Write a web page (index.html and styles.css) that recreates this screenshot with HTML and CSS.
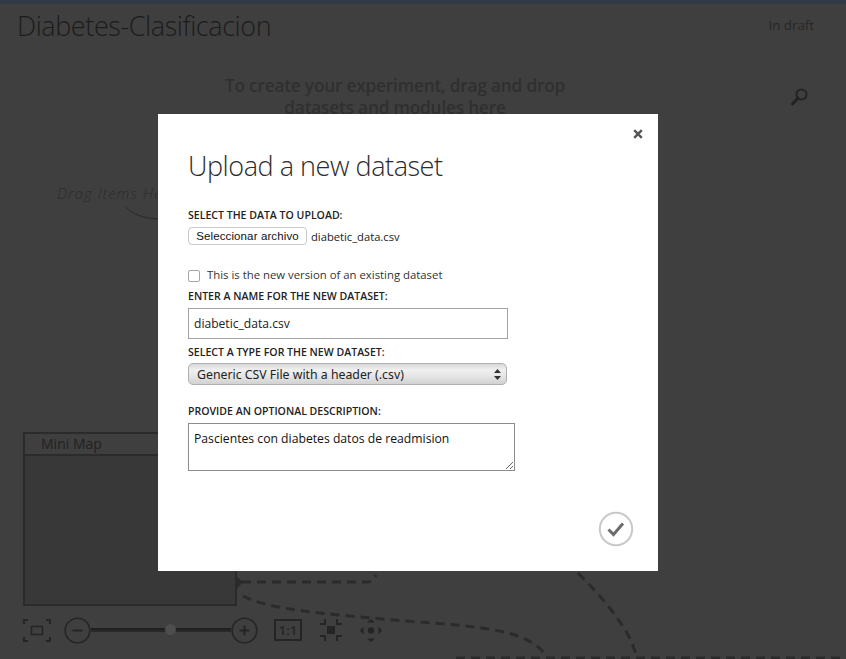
FILE: index.html
```html
<!DOCTYPE html>
<html lang="en">
<head>
<meta charset="utf-8">
<title>Diabetes-Clasificacion</title>
<link rel="stylesheet" href="styles.css">
</head>
<body>
<div class="page">
  <div class="topbar"></div>
  <header class="header">
    <h1 class="exp-title">Diabetes-Clasificacion</h1>
    <span class="status">In draft</span>
  </header>
  <main class="canvas">
    <p class="hint">To create your experiment, drag and drop<br>datasets and modules here</p>
    <svg class="search-icon" width="20" height="20" viewBox="0 0 20 20"><circle cx="11.5" cy="7.5" r="5" fill="none" stroke="#232323" stroke-width="2"/><path d="M8 11 L2.5 17" stroke="#232323" stroke-width="3" stroke-linecap="round"/></svg>
    <span class="drag-note">Drag Items Here</span>
    <svg class="lines" width="846" height="659" viewBox="0 0 846 659">
      <path d="M126 207 C132 214 142 218 158 219" fill="none" stroke="#2a2a2a" stroke-width="1"/>
      <g fill="none" stroke="#2b2b2b" stroke-width="3" stroke-dasharray="9 6">
        <path d="M242 582 H368 Q373 581 376 575"/>
        <path d="M243 596 C270 610 320 613 404 621 C480 626 530 630 546 656"/>
        <path d="M578 573 C605 600 630 630 636 655"/>
        <path d="M456 658 H846" />
      </g>
      <path d="M236 576 L243 582 L236 590 Z" fill="#2b2b2b"/>
    </svg>
    <section class="minimap">
      <div class="minimap-title">Mini Map</div>
    </section>
    <div class="toolbar">
      <svg class="tool" width="28" height="23" viewBox="0 0 28 23" fill="none" stroke="#252525" stroke-width="2">
        <path d="M1 5V1H5M23 1H27V5M1 18V22H5M23 22H27V18"/>
        <rect x="8.5" y="7.5" width="11" height="8" stroke-width="1.6"/>
      </svg>
      <div class="zoom">
        <svg width="27" height="27" viewBox="0 0 27 27" fill="none" stroke="#252525"><circle cx="13.5" cy="13.5" r="12.3" stroke-width="1.6"/><path d="M8.5 13.5H18.5" stroke-width="2"/></svg>
        <div class="track"><span class="thumb"></span></div>
        <svg width="27" height="27" viewBox="0 0 27 27" fill="none" stroke="#252525"><circle cx="13.5" cy="13.5" r="12.3" stroke-width="1.6"/><path d="M8.5 13.5H18.5M13.5 8.5V18.5" stroke-width="2"/></svg>
      </div>
      <span class="one-to-one">1:1</span>
      <svg class="tool tool-center" width="22" height="22" viewBox="0 0 22 22" fill="none" stroke="#252525" stroke-width="2">
        <rect x="7" y="7" width="8" height="8" fill="#252525" stroke="none"/>
        <path d="M5 0V5H0M17 0V5H22M5 22V17H0M17 22V17H22"/>
      </svg>
      <svg class="tool tool-move" width="22" height="23" viewBox="0 0 22 23" fill="#252525">
        <circle cx="11" cy="11.5" r="3.2"/>
        <path d="M11 0L15 3.5H7ZM11 23L15 19.5H7ZM0 11.5L3.5 7.5V15.5ZM22 11.5L18.5 7.5V15.5Z"/>
      </svg>
    </div>
  </main>
</div>
<div class="modal" role="dialog">
  <button class="close" aria-label="Close">
    <svg width="10" height="10" viewBox="0 0 10 10"><path d="M1.2 1.2L8.8 8.8M8.8 1.2L1.2 8.8" stroke="#555" stroke-width="2.4"/></svg>
  </button>
  <h2 class="modal-title">Upload a new dataset</h2>
  <label class="label">SELECT THE DATA TO UPLOAD:</label>
  <div class="file-row">
    <button class="file-btn">Seleccionar archivo</button>
    <span class="file-name">diabetic_data.csv</span>
  </div>
  <label class="check-row">
    <input type="checkbox" class="check">
    <span>This is the new version of an existing dataset</span>
  </label>
  <label class="label label-name">ENTER A NAME FOR THE NEW DATASET:</label>
  <input class="text-input" type="text" value="diabetic_data.csv">
  <label class="label label-type">SELECT A TYPE FOR THE NEW DATASET:</label>
  <div class="select-wrap">
    <select class="select"><option>Generic CSV File with a header (.csv)</option></select>
    <svg class="select-arrows" width="7" height="11" viewBox="0 0 7 11"><path d="M3.5 0L7 4H0ZM3.5 11L0 7H7Z" fill="#333"/></svg>
  </div>
  <label class="label label-desc">PROVIDE AN OPTIONAL DESCRIPTION:</label>
  <textarea class="desc">Pascientes con diabetes datos de readmision</textarea>
  <div class="actions">
    <svg width="36" height="36" viewBox="0 0 36 36" fill="none"><circle cx="18" cy="18" r="16.2" stroke="#c8c8c8" stroke-width="2"/><path d="M10.5 18.5L15.5 23.5L25 12.5" stroke="#6b6b6b" stroke-width="3"/></svg>
  </div>
</div>
</body>
</html>
```
FILE: styles.css
```css
* { box-sizing: border-box; }
html, body { margin: 0; height: 100%; overflow: hidden; }
body { background: #3f3f3f; font-family: "Open Sans", "Noto Sans", sans-serif; color: #222; }
.page { position: relative; width: 846px; height: 659px; overflow: hidden; }
.topbar { height: 4px; background: #323a45; }
.header { display: flex; justify-content: space-between; align-items: flex-start; padding: 4px 32px 0 17px; height: 40px; }
.exp-title { margin: 0; font-weight: 300; font-size: 27px; line-height: 36px; color: #1c1c1c; letter-spacing: -0.42px; }
.status { font-size: 13.3px; line-height: 34px; color: #262626; }
.canvas { position: relative; height: 615px; }
.hint { position: absolute; left: 170px; top: 31px; width: 450px; margin: 0; text-align: center; font-weight: 600; font-size: 17.25px; line-height: 22px; color: #2f2f2f; letter-spacing: -0.2px; }
.search-icon { position: absolute; left: 790px; top: 43px; }
.drag-note { position: absolute; left: 57px; top: 139px; font-weight: 300; font-style: italic; font-size: 15px; color: #2b2b2b; letter-spacing: 1px; white-space: nowrap; }
.lines { position: absolute; left: 0; top: -44px; pointer-events: none; }
.minimap { position: absolute; left: 23px; top: 388px; width: 214px; height: 174px; background: #383838; border: 2px solid #2b2b2b; }
.minimap-title { height: 22px; padding-left: 16px; font-size: 14px; line-height: 20px; color: #222; background: #3f3f3f; border-bottom: 2px solid #2b2b2b; }
.toolbar { position: absolute; left: 23px; top: 572px; display: flex; align-items: center; height: 28px; }
.tool { flex: none; }
.zoom { display: flex; align-items: center; margin-left: 13px; }
.track { position: relative; width: 140px; height: 4px; background: linear-gradient(#1d1d1d, #2c2c2c); }
.thumb { position: absolute; left: 74px; top: -4px; width: 11px; height: 11px; border-radius: 50%; background: #4d4d4d; }
.one-to-one { margin-left: 16px; width: 28px; height: 22px; border: 2px solid #252525; font-size: 13px; font-weight: 600; line-height: 18px; text-align: center; color: #252525; }
.tool-center { margin-left: 18px; }
.tool-move { margin-left: 18px; }
.modal { position: absolute; left: 158px; top: 114px; width: 500px; height: 457px; background: #fff; padding: 33px 30px 0; color: #333; }
.close { position: absolute; left: 475px; top: 15px; width: 10px; height: 10px; padding: 0; border: 0; background: none; display: flex; }
.modal-title { margin: 0; font-weight: 300; font-size: 27px; line-height: 38px; color: #2b2b2b; letter-spacing: -0.45px; }
.label { display: block; font-size: 10.55px; font-weight: 600; line-height: 14px; color: #222; white-space: nowrap; }
.modal-title + .label { margin-top: 23px; }
.file-row { display: flex; align-items: center; height: 18px; margin-top: 5px; }
.file-btn { width: 119px; height: 18px; padding: 0; border: 1px solid #c9c9c9; border-radius: 4px; background: #fff; font-family: "Liberation Sans", sans-serif; font-size: 11.5px; color: #111; letter-spacing: .12px; }
.file-name { margin-left: 4px; font-size: 11.2px; color: #222; }
.check-row { display: flex; align-items: center; margin-top: 21px; height: 16px; font-size: 11.35px; color: #333; }
.check { appearance: none; width: 12px; height: 12px; margin: 4px 7px 0 0; border: 1px solid #a6a6a6; border-radius: 2px; background: #fff; }
.label-name { margin-top: 7px; }
.text-input { display: block; width: 320px; height: 31px; margin-top: 5px; padding: 0 5px; border: 1px solid #a3a3a3; border-radius: 0; font-family: inherit; font-size: 12.1px; color: #222; }
.label-type { margin-top: 6px; }
.select-wrap { position: relative; width: 319px; height: 22px; margin-top: 4px; }
.select { appearance: none; display: block; width: 100%; height: 100%; padding: 0 8px; border: 1px solid #b0b0b0; border-radius: 5px; background: linear-gradient(#d8d8d8, #f0f0f0 30%, #e6e6e6 60%, #d2d2d2); font-family: "Noto Sans", sans-serif; font-size: 12.3px; color: #222; }
.select-arrows { position: absolute; right: 6px; top: 6px; pointer-events: none; }
.label-desc { margin-top: 19px; }
.desc { display: block; width: 327px; height: 48px; margin-top: 5px; padding: 6px 5px 3px; border: 1px solid #8c8c8c; border-radius: 0; font-family: inherit; font-size: 12.2px; line-height: 17px; color: #111; }
.actions { position: absolute; right: 24px; bottom: 24px; display: flex; }
```
